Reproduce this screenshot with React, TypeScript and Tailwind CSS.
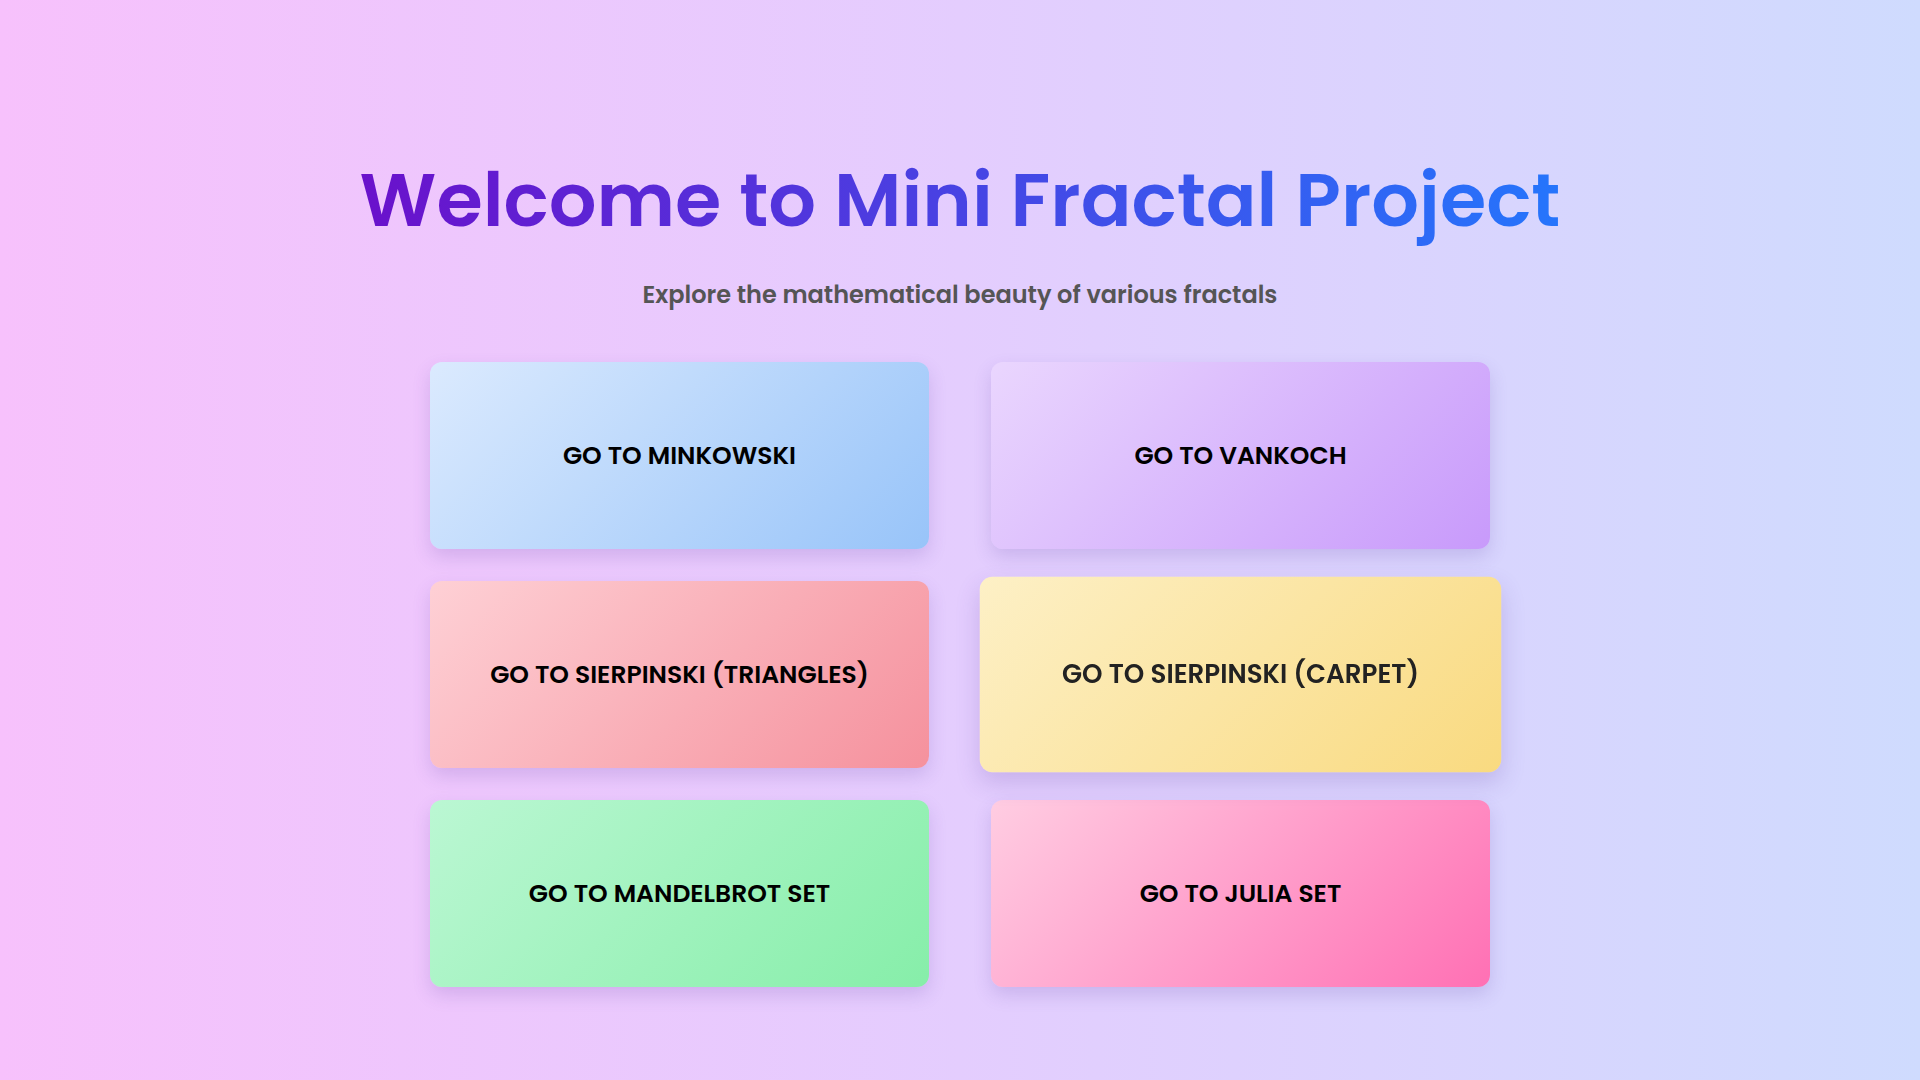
const LINKS = [
  { label: "Go to Minkowski", cls: "bg-[linear-gradient(135deg,#dbeafe,#98c4f9)] text-black" },
  { label: "Go to VanKoch", cls: "bg-[linear-gradient(135deg,#ead6fe,#c89afb)] text-black" },
  { label: "Go to Sierpinski (Triangles)", cls: "bg-[linear-gradient(135deg,#fed0d5,#f5919d)] text-black" },
  {
    label: "Go to Sierpinski (Carpet)",
    cls: "bg-[linear-gradient(135deg,#fdf0c6,#f9da80)] text-[#222] scale-[1.045] shadow-[0_10px_22px_rgba(90,60,160,0.2)]",
  },
  { label: "Go to Mandelbrot Set", cls: "bg-[linear-gradient(135deg,#bbf7d3,#86eea9)] text-black" },
  { label: "Go to Julia Set", cls: "bg-[linear-gradient(135deg,#ffcde2,#ff70b4)] text-black" },
];

export default function App() {
  return (
    <div className="min-h-screen w-full bg-[linear-gradient(to_right,#f7c1fc,#e4cdfe_50%,#cfdbfe)] font-['Poppins','Lato','Liberation_Sans',sans-serif]">
      <main className="flex flex-col items-center pt-[155px]">
        {/* titulo */}
        <h1 className="bg-[linear-gradient(to_right,#6a11cb,#2575fc)] bg-clip-text text-transparent text-[75px] font-semibold leading-[1.2] pb-2">
          Welcome to Mini Fractal Project
        </h1>
        <p className="mt-[30px] text-[24px] font-semibold text-[#555] leading-none">
          Explore the mathematical beauty of various fractals
        </p>

        <div className="mt-[55px] grid grid-cols-[499px_499px] gap-x-[62px] gap-y-[32px]">
          {LINKS.map((l) => (
            <a
              key={l.label}
              href="#"
              className={`flex h-[187px] items-center justify-center rounded-xl shadow-[0_8px_18px_rgba(90,60,160,0.18)] text-[25px] font-semibold uppercase transition-transform ${l.cls}`}
            >
              {l.label}
            </a>
          ))}
        </div>
      </main>
    </div>
  );
}
